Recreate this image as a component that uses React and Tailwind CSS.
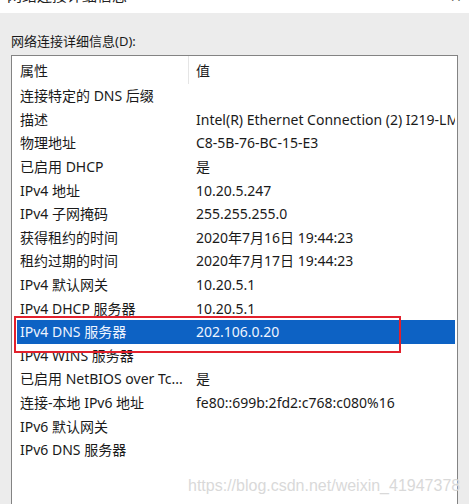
import React from "react";

const rows = [
  ["连接特定的 DNS 后缀", ""],
  ["描述", "Intel(R) Ethernet Connection (2) I219-LM"],
  ["物理地址", "C8-5B-76-BC-15-E3"],
  ["已启用 DHCP", "是"],
  ["IPv4 地址", "10.20.5.247"],
  ["IPv4 子网掩码", "255.255.255.0"],
  ["获得租约的时间", "2020年7月16日 19:44:23"],
  ["租约过期的时间", "2020年7月17日 19:44:23"],
  ["IPv4 默认网关", "10.20.5.1"],
  ["IPv4 DHCP 服务器", "10.20.5.1"],
  ["IPv4 DNS 服务器", "202.106.0.20"],
  ["IPv4 WINS 服务器", ""],
  ["已启用 NetBIOS over Tc...", "是"],
  ["连接-本地 IPv6 地址", "fe80::699b:2fd2:c768:c080%16"],
  ["IPv6 默认网关", ""],
  ["IPv6 DNS 服务器", ""],
];

export default function App() {
  return (
    <div
      className="relative w-[469px] h-[504px] overflow-hidden bg-[#ececec] text-[13px] text-[#1a1a1a]"
      style={{ fontFamily: '"Noto Sans", "Noto Sans CJK SC", sans-serif' }}
    >
      <div className="relative h-[13px] bg-white overflow-hidden">
        <div className="absolute left-[7px] top-[-13px] text-[15px] leading-[16px] text-[#222]">
          网络连接详细信息
        </div>
        <div className="absolute left-[450px] top-[-10px] text-[14px] leading-[13px] text-[#333]">✕</div>
      </div>
      <div className="pl-[11px] pt-[19px] h-[42px] leading-[18px]">网络连接详细信息(D):</div>
      <div className="ml-[11px] w-[447px] h-[460px] border border-[#838383] bg-white overflow-hidden text-[14px]">
        <div className="flex h-[28px] items-center ml-[5px] mr-[2px]">
          <div className="w-[171px] pl-[3px]">属性</div>
          <div className="w-px h-[28px] bg-[#e5e5e5]" />
          <div className="pl-[7px]">值</div>
        </div>
        <div className="ml-[5px] mr-[2px]">
          {rows.map(([k, v], i) => {
            const sel = i === 10;
            return (
              <div
                key={i}
                className={
                  sel
                    ? "flex items-center h-[23.6px] bg-[#0d62c4] text-[#eef4ff] whitespace-nowrap overflow-hidden"
                    : "flex items-center h-[23.6px] whitespace-nowrap overflow-hidden"
                }
              >
                <div className="w-[179px] shrink-0 pl-[3px]">{k}</div>
                <div className="shrink-0">{v}</div>
              </div>
            );
          })}
        </div>
      </div>
      <div className="absolute left-[14px] top-[316px] w-[387px] h-[37px] border-2 border-[#e2202c]" />
      <div
        className="absolute left-[188px] top-[476px] text-[16px] leading-[20px] text-[#d9d9d9] whitespace-nowrap"
        style={{ fontFamily: '"Liberation Sans", Arial, sans-serif' }}
      >
        https://blog.csdn.net/weixin_41947378
      </div>
    </div>
  );
}
